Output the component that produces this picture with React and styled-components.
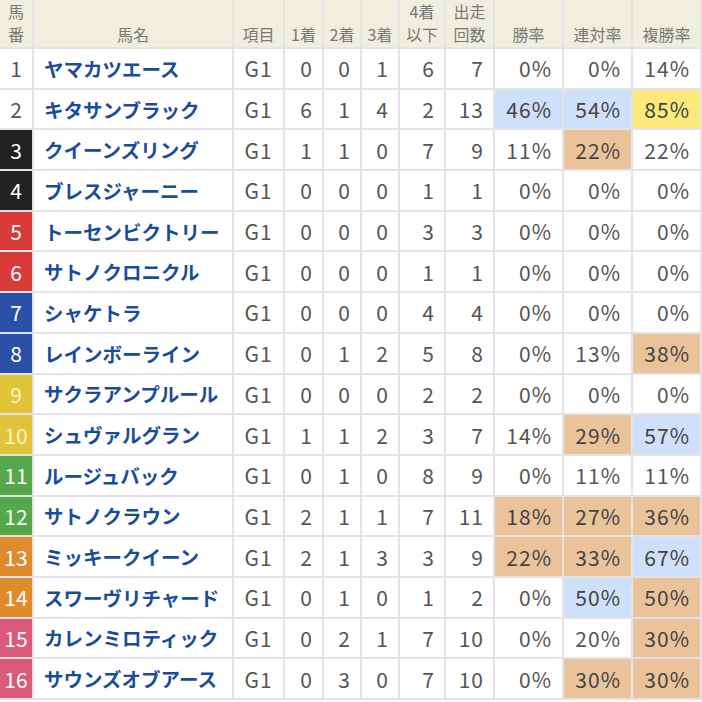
import React from 'react';
import styled, { createGlobalStyle } from 'styled-components';

const GlobalStyle = createGlobalStyle`
  body {
    margin: 0;
    background: #ffffff;
    font-family: "Noto Sans CJK JP", "Noto Sans", sans-serif;
  }
`;

const FRAME = {
  1: { bg: '#ffffff', fg: '#555555' },
  2: { bg: '#222222', fg: '#ffffff' },
  3: { bg: '#d93a3a', fg: '#ffffff' },
  4: { bg: '#2a50a8', fg: '#ffffff' },
  5: { bg: '#e2c43a', fg: '#fff6c4' },
  6: { bg: '#55a84a', fg: '#ffffff' },
  7: { bg: '#e08c2c', fg: '#ffffff' },
  8: { bg: '#db5a7a', fg: '#ffffff' },
};

const HL = {
  b: '#cfe0fb',
  o: '#ebc39a',
  y: '#fbe97c',
};

const Table = styled.div`
  display: grid;
  grid-template-columns: 32px 198px 49px 37px 36px 36px 44px 47px 67px 67px 67px;
  grid-template-rows: 47px repeat(16, 38.69px);
  gap: 2px;
  width: 702px;
  box-sizing: border-box;
  padding: 0 2px 2px 0;
  background: #e3e3e8;
`;

const HeadCell = styled.div`
  background: #efeedf;
  color: #777777;
  font-size: 16px;
  line-height: 23px;
  display: flex;
  flex-direction: column;
  justify-content: flex-end;
  align-items: center;
  padding-bottom: 1px;
  white-space: nowrap;
`;

const FrameCell = styled.div`
  background: ${(p) => p.$bg};
  color: ${(p) => p.$fg};
  font-size: 21px;
  display: flex;
  align-items: center;
  justify-content: center;
`;

const NameCell = styled.div`
  background: #ffffff;
  color: #1a4c9c;
  font-size: 19.5px;
  font-weight: 700;
  display: flex;
  align-items: center;
  padding-left: 10px;
  white-space: nowrap;
  overflow: hidden;
`;

const Cell = styled.div`
  background: ${(p) => (p.$hl ? HL[p.$hl] : '#ffffff')};
  color: ${(p) => (p.$hl ? '#444444' : '#555555')};
  font-size: 21px;
  letter-spacing: 1px;
  display: flex;
  align-items: center;
  justify-content: ${(p) => (p.$center ? 'center' : 'flex-end')};
  padding-right: ${(p) => (p.$center ? '0' : p.$pct ? '10px' : '9px')};
`;

const rows = [
  [1, 'ヤマカツエース', 0, 0, 1, 6, 7, ['0%'], ['0%'], ['14%']],
  [2, 'キタサンブラック', 6, 1, 4, 2, 13, ['46%', 'b'], ['54%', 'b'], ['85%', 'y']],
  [3, 'クイーンズリング', 1, 1, 0, 7, 9, ['11%'], ['22%', 'o'], ['22%']],
  [4, 'ブレスジャーニー', 0, 0, 0, 1, 1, ['0%'], ['0%'], ['0%']],
  [5, 'トーセンビクトリー', 0, 0, 0, 3, 3, ['0%'], ['0%'], ['0%']],
  [6, 'サトノクロニクル', 0, 0, 0, 1, 1, ['0%'], ['0%'], ['0%']],
  [7, 'シャケトラ', 0, 0, 0, 4, 4, ['0%'], ['0%'], ['0%']],
  [8, 'レインボーライン', 0, 1, 2, 5, 8, ['0%'], ['13%'], ['38%', 'o']],
  [9, 'サクラアンプルール', 0, 0, 0, 2, 2, ['0%'], ['0%'], ['0%']],
  [10, 'シュヴァルグラン', 1, 1, 2, 3, 7, ['14%'], ['29%', 'o'], ['57%', 'b']],
  [11, 'ルージュバック', 0, 1, 0, 8, 9, ['0%'], ['11%'], ['11%']],
  [12, 'サトノクラウン', 2, 1, 1, 7, 11, ['18%', 'o'], ['27%', 'o'], ['36%', 'o']],
  [13, 'ミッキークイーン', 2, 1, 3, 3, 9, ['22%', 'o'], ['33%', 'o'], ['67%', 'b']],
  [14, 'スワーヴリチャード', 0, 1, 0, 1, 2, ['0%'], ['50%', 'b'], ['50%', 'o']],
  [15, 'カレンミロティック', 0, 2, 1, 7, 10, ['0%'], ['20%'], ['30%', 'o']],
  [16, 'サウンズオブアース', 0, 3, 0, 7, 10, ['0%'], ['30%', 'o'], ['30%', 'o']],
];

const headers = [
  ['馬', '番'],
  ['馬名'],
  ['項目'],
  ['1着'],
  ['2着'],
  ['3着'],
  ['4着', '以下'],
  ['出走', '回数'],
  ['勝率'],
  ['連対率'],
  ['複勝率'],
];

// two horses per frame with 16 runners
const frameOf = (no) => Math.ceil(no / 2);

export default function App() {
  return (
    <>
      <GlobalStyle />
      <Table>
        {headers.map((h, i) => (
          <HeadCell key={i}>
            {h.map((line) => (
              <span key={line}>{line}</span>
            ))}
          </HeadCell>
        ))}
        {rows.map(([no, name, a, b, c, d, runs, win, ren, fuku]) => {
          const f = FRAME[frameOf(no)];
          return (
            <React.Fragment key={no}>
              <FrameCell $bg={f.bg} $fg={f.fg}>{no}</FrameCell>
              <NameCell>{name}</NameCell>
              <Cell $center>G1</Cell>
              <Cell>{a}</Cell>
              <Cell>{b}</Cell>
              <Cell>{c}</Cell>
              <Cell>{d}</Cell>
              <Cell>{runs}</Cell>
              <Cell $pct $hl={win[1]}>{win[0]}</Cell>
              <Cell $pct $hl={ren[1]}>{ren[0]}</Cell>
              <Cell $pct $hl={fuku[1]}>{fuku[0]}</Cell>
            </React.Fragment>
          );
        })}
      </Table>
    </>
  );
}
